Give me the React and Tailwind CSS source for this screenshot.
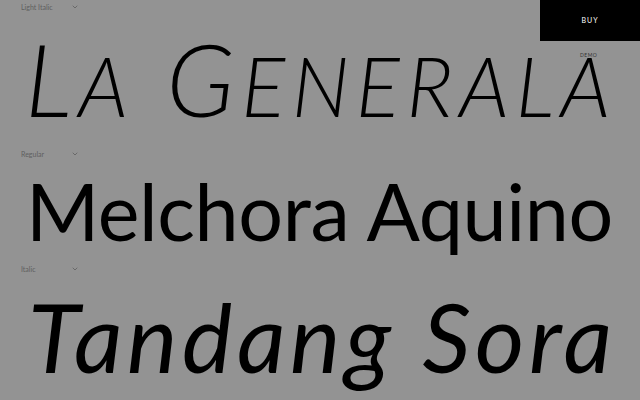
import React from "react";
import { ChevronDown } from "lucide-react";

function StylePicker({ label }) {
  return (
    <div className="flex items-center w-[81px] justify-between pl-[21px] pr-[2px] h-[12px] text-[7px] text-[#5f5f5f] whitespace-nowrap">
      <span>{label}</span>
      <ChevronDown size={8} strokeWidth={2} className="text-[#555]" />
    </div>
  );
}

function SmallCaps({ text }) {
  // big first letter of each word, the rest at small-cap size
  return text.split(" ").map((word, i) => (
    <React.Fragment key={i}>
      {i > 0 && " "}
      <span>{word[0]}</span>
      <span className="text-[82px]">{word.slice(1).toUpperCase()}</span>
    </React.Fragment>
  ));
}

export default function App() {
  return (
    <div
      className="relative w-[640px] h-[400px] overflow-hidden bg-[#939393] text-black"
      style={{ fontFamily: "Lato, 'Noto Sans', sans-serif" }}
    >
      {/* Buy button */}
      <button className="absolute top-0 right-0 w-[100px] h-[41px] bg-black text-white text-[7px] tracking-[1px]">
        BUY
      </button>
      <span className="absolute top-[52px] left-[580px] text-[5px] tracking-[0.5px] text-[#333]">DEMO</span>

      <div className="flex flex-col pt-[1px]">
        <div>
          <StylePicker label="Light Italic" />
          <div className="pl-[25px] whitespace-nowrap font-light italic text-[100px] leading-[100px] mt-[15px] tracking-[6.5px]">
            <SmallCaps text="La Generala" />
          </div>
        </div>

        <div className="mt-[13px]">
          <StylePicker label="Regular" />
          <div className="pl-[26px] whitespace-nowrap font-normal text-[79px] leading-[80px] mt-[11px] tracking-[-0.4px]">
            Melchora Aquino
          </div>
        </div>

        <div className="mt-[12px]">
          <StylePicker label="Italic" />
          <div className="pl-[28px] whitespace-nowrap font-normal italic text-[95px] leading-[94px] mt-[14px] tracking-[4.6px]">
            Tandang Sora
          </div>
        </div>
      </div>
    </div>
  );
}
